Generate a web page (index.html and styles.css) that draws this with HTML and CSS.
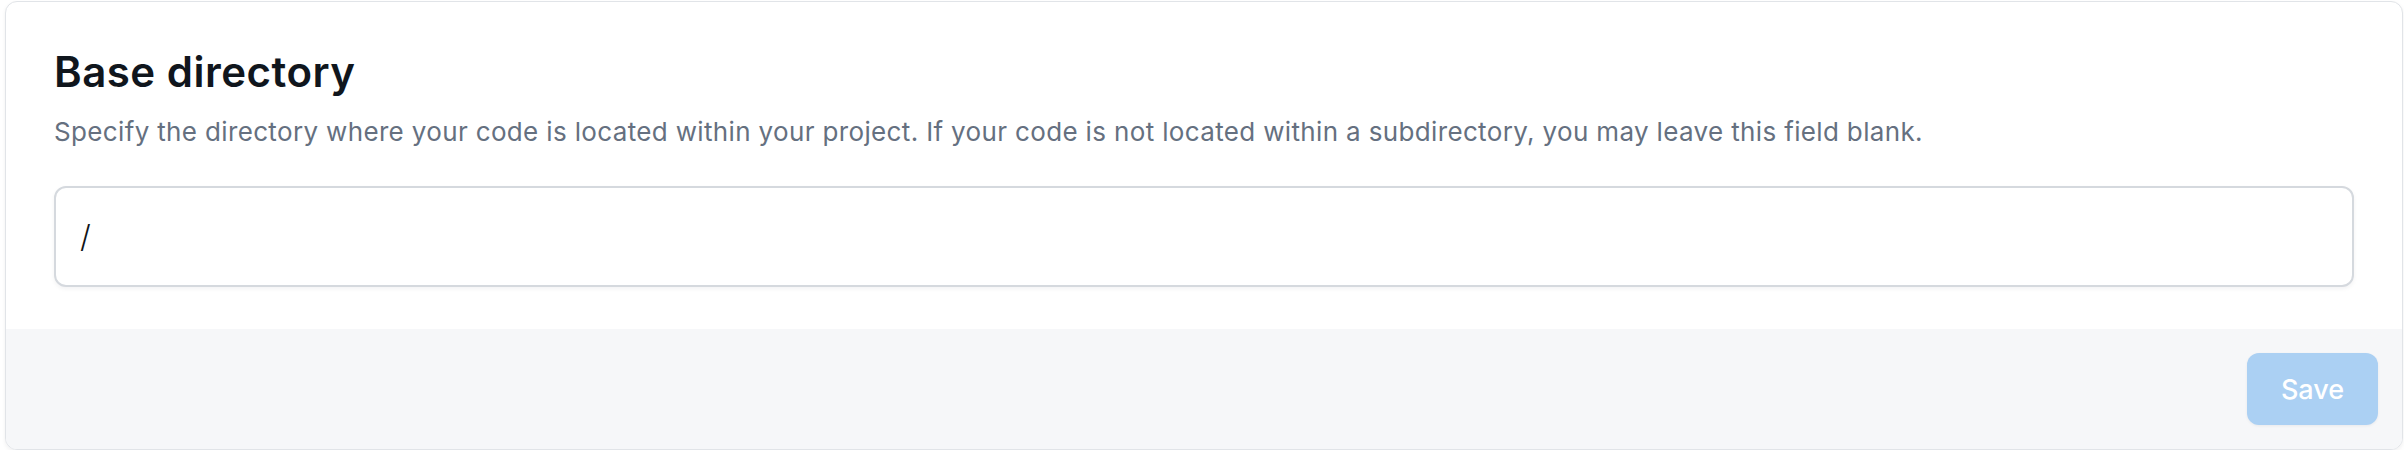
FILE: index.html
```html
<!DOCTYPE html>
<html lang="en">
<head>
<meta charset="utf-8">
<title>Base directory</title>
<link rel="stylesheet" href="styles.css">
</head>
<body>
<div class="page">
  <section class="card">
    <div class="card-body">
      <h2 class="title">Base directory</h2>
      <p class="desc">Specify the directory where your code is located within your project. If your code is not located within a subdirectory, you may leave this field blank.</p>
      <input class="field" type="text" value="/">
    </div>
    <div class="card-footer">
      <button class="save" type="button" disabled>Save</button>
    </div>
  </section>
</div>
</body>
</html>
```

FILE: styles.css
```css
html, body {
  margin: 0;
  padding: 0;
  background: #ffffff;
}

.page {
  padding: 1px 1px 0 5px;
  font-family: Inter, "Noto Sans", sans-serif;
}

.card {
  border: 1.5px solid #e1e4e8;
  border-radius: 12px;
  background: #ffffff;
  overflow: hidden;
  box-shadow: 0 2px 4px rgba(16, 24, 40, 0.06);
}

.card-body {
  padding: 45px 48px 42px 48px;
}

.title {
  margin: 0;
  font-size: 42px;
  line-height: 50px;
  font-weight: 600;
  letter-spacing: 0.5px;
  color: #10161d;
}

.desc {
  margin: 17px 0 0 0;
  font-size: 26px;
  line-height: 36px;
  letter-spacing: 0.35px;
  color: #657080;
}

.field {
  display: block;
  box-sizing: border-box;
  width: 100%;
  height: 101px;
  margin-top: 36px;
  padding: 0 24px;
  border: 2px solid #d5d9de;
  border-radius: 12px;
  font-family: Inter, "Noto Sans", sans-serif;
  font-size: 31px;
  font-weight: 300;
  color: #111418;
  background: #ffffff;
  box-shadow: 0 2px 4px rgba(16, 24, 40, 0.05);
  outline: none;
}

.card-footer {
  background: #f6f7f9;
  padding: 24px;
  display: flex;
  justify-content: flex-end;
}

.save {
  width: 131px;
  height: 72px;
  border: none;
  border-radius: 12px;
  background: #abd0f3;
  color: #ffffff;
  font-family: Inter, "Noto Sans", sans-serif;
  font-size: 27px;
  font-weight: 500;
  box-shadow: 0 1px 3px rgba(16, 24, 40, 0.06);
}
```
